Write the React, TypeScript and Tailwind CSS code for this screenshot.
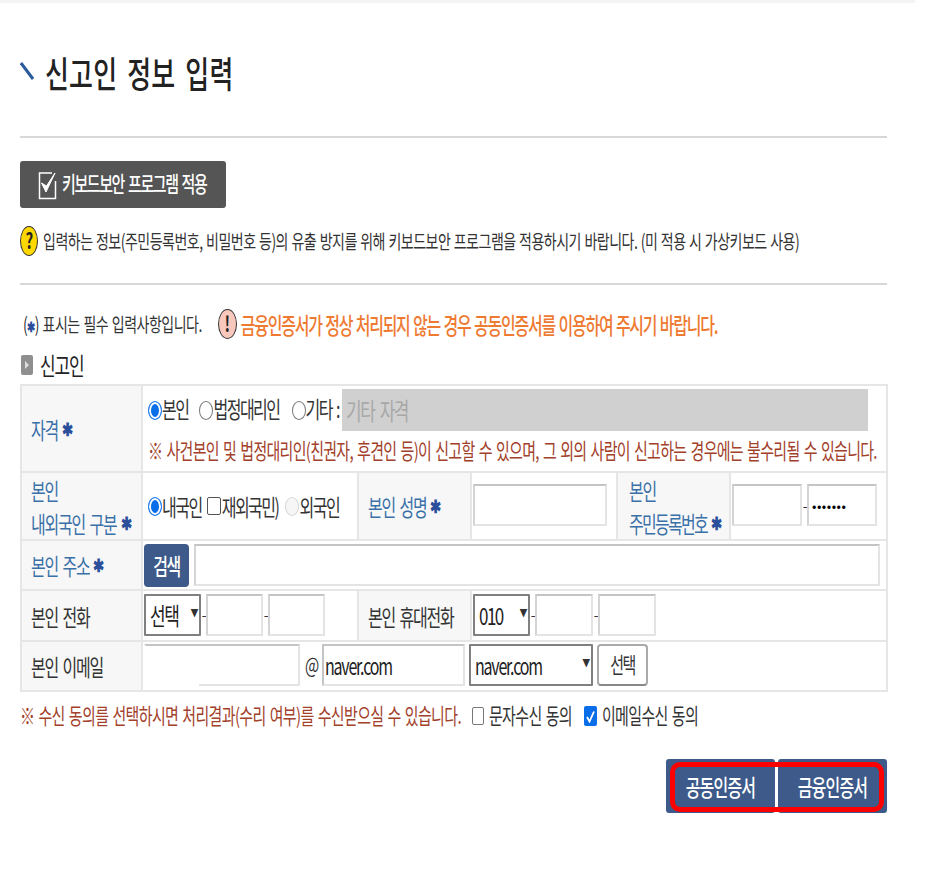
import React from "react";

const font = { fontFamily: '"Noto Sans CJK KR", "Liberation Sans", sans-serif' };

function T({ children, className = "" }: { children: React.ReactNode; className?: string }) {
  return <span className={"inline-block origin-center scale-y-[1.42] whitespace-nowrap " + className}>{children}</span>;
}

function Star() {
  return <span className="ml-[4px] inline-block origin-center scale-y-[1.35] text-[13px] font-bold text-[#2b4f9b]">✱</span>;
}

function Label({ children, req, dark, className = "" }: { children: React.ReactNode; req?: boolean; dark?: boolean; className?: string }) {
  return (
    <span className={"inline-flex items-center " + (dark ? "text-[#333] " : "text-[#3a70a8] ") + className}>
      <T>{children}</T>
      {req && <Star />}
    </span>
  );
}

function Th({ children }: { children: React.ReactNode }) {
  return (
    <th className="border-2 border-[#e6e6e6] bg-[#f7f7f7] pl-[9px] pr-0 text-left text-[16px] font-normal tracking-[-1.2px] [word-spacing:2px]">
      {children}
    </th>
  );
}

function Td({ children, colSpan, className = "" }: { children?: React.ReactNode; colSpan?: number; className?: string }) {
  return (
    <td colSpan={colSpan} className={"border-2 border-[#e6e6e6] p-0 text-[16px] tracking-[-1.5px] text-[#333] " + className}>
      {children}
    </td>
  );
}

function Box({ className = "", type = "text", value }: { className?: string; type?: string; value?: string }) {
  return (
    <input
      type={type}
      readOnly
      value={value ?? ""}
      aria-label="입력"
      className={"h-[42px] shrink-0 border-2 border-[#e4e4e4] border-t-[#c4c4c4] border-l-[#d4d4d4] bg-white px-[3px] outline-none " + className}
    />
  );
}

function Sel({ text, className = "" }: { text: string; className?: string }) {
  return (
    <div className={"relative flex h-[42px] shrink-0 items-center rounded-[1px] border-2 border-[#808080] bg-white pl-[4px] text-[#222] " + className}>
      <T>{text}</T>
      <span className="absolute right-[2px] top-[11px] origin-center scale-y-[1.3] text-[8px] text-[#333]">▼</span>
    </div>
  );
}

function Radio({ on, faded, className = "" }: { on?: boolean; faded?: boolean; className?: string }) {
  return (
    <span
      className={
        "block h-[19px] w-[14px] shrink-0 rounded-[50%] border-[1.5px] " +
        (on
          ? "border-[#1f7cf0] bg-[#0a6ee8] shadow-[inset_0_0_0_2px_#fff] "
          : faded
          ? "border-[#d8d8d8] bg-[#f6f6f6] "
          : "border-[#777] bg-white ") +
        className
      }
    />
  );
}

function Dash() {
  return <span className="w-[5px] shrink-0 text-center text-[14px] text-[#333]">-</span>;
}

export default function App() {
  return (
    <div className="relative h-[873px] w-[925px] overflow-hidden bg-white text-[#222]" style={font}>
      <div className="h-[3px] w-[915px] bg-[#f4f4f4]" />
      <div className="ml-[20px] w-[867px]">
        {/* title */}
        <div className="flex h-[135px] flex-col">
          <div className="flex h-[133px] items-center">
            <svg width="14" height="18" viewBox="0 0 14 18" className="mt-[2px] shrink-0">
              <path d="M1 1 L13 17" stroke="#2a5b9c" strokeWidth="3" fill="none" />
            </svg>
            <h1 className="ml-[11px] mt-[4px] text-[26px] font-medium tracking-[0.15px] text-[#222] [word-spacing:4px]">
              <T className="scale-y-[1.5]">신고인 정보 입력</T>
            </h1>
          </div>
          <div className="h-[2px] bg-[#d8d8d8]" />
        </div>

        {/* keyboard button */}
        <button className="mt-[23px] flex h-[47px] w-[206px] items-center rounded-[3px] bg-[#555] pl-[18px] text-[15px] tracking-[-1.4px] text-white [word-spacing:2px]">
          <svg width="19" height="30" viewBox="0 0 19 30" className="shrink-0">
            <path d="M14 3H1.5V28.5H17.5V11" fill="none" stroke="#fff" strokeWidth="1.5" />
            <path d="M3.5 13 L8 22 L17 3 L8.5 16 Z" fill="#fff" stroke="#fff" strokeWidth="1" />
          </svg>
          <T className="ml-[5px] font-medium">키보드보안 프로그램 적용</T>
        </button>

        {/* info */}
        <div className="mt-[18px] flex h-[30px] items-center text-[14px] tracking-[-0.5px] text-[#333] [word-spacing:0.8px]">
          <span className="flex h-[30px] w-[18px] shrink-0 items-center justify-center rounded-[50%] border border-[#333] bg-[#ffd800] text-[15px] font-bold text-[#222]">
            <T>?</T>
          </span>
          <T className="ml-[5px]">입력하는 정보(주민등록번호, 비밀번호 등)의 유출 방지를 위해 키보드보안 프로그램을 적용하시기 바랍니다. (미 적용 시 가상키보드 사용)</T>
        </div>
        <div className="mt-[27px] h-[2px] bg-[#d8d8d8]" />

        {/* notice */}
        <div className="mt-[24px] flex h-[30px] items-center">
          <span className="ml-[3px] text-[14px] tracking-[-0.5px] text-[#333] [word-spacing:1px]">
            <T>
              (<span className="text-[10px] font-bold text-[#2b4f9b]">✱</span>) 표시는 필수 입력사항입니다.
            </T>
          </span>
          <span className="ml-[16px] flex h-[30px] w-[19px] shrink-0 items-center justify-center rounded-[50%] border border-[#333] bg-[#f8c8bd] text-[15px] font-bold text-[#222]">
            <T>!</T>
          </span>
          <T className="ml-[4px] text-[16px] font-medium tracking-[-1.25px] text-[#ee7a32] [word-spacing:1.2px]">금융인증서가 정상 처리되지 않는 경우 공동인증서를 이용하여 주시기 바랍니다.</T>
        </div>

        {/* section heading */}
        <div className="mt-[12px] flex h-[28px] items-center">
          <span className="ml-[1px] flex h-[20px] w-[12px] shrink-0 items-center justify-center rounded-[2px] bg-[#8f8f8f]">
            <span className="h-[8px] w-[4px] bg-[#ddd] [clip-path:polygon(0_0,100%_50%,0_100%)]" />
          </span>
          <T className="ml-[7px] text-[17px] tracking-[-1.1px] text-[#222]">신고인</T>
        </div>

        {/* form table */}
        <table className="mt-[5px] w-[866px] table-fixed border-collapse">
          <colgroup>
            <col className="w-[121px]" />
            <col className="w-[216px]" />
            <col className="w-[113px]" />
            <col className="w-[146px]" />
            <col className="w-[113px]" />
            <col className="w-[157px]" />
          </colgroup>
          <tbody>
            <tr className="h-[87px]">
              <Th><Label req>자격</Label></Th>
              <Td colSpan={5}>
                <div className="flex h-[45px] items-center pl-[5px] [word-spacing:2px]">
                  <Radio on className="mt-[3px]" />
                  <T className="-mt-[2px]">본인</T>
                  <Radio className="ml-[11px] mt-[3px]" />
                  <T className="-mt-[2px]">법정대리인</T>
                  <Radio className="ml-[12px] mt-[3px]" />
                  <T className="-mt-[2px]">기타 :</T>
                  <div className="ml-[3px] mt-[1px] flex h-[42px] w-[526px] shrink-0 items-center bg-[#d0d0d0] pl-[4px] text-[17px] text-[#a8a8a8] [word-spacing:3px]">
                    <T>기타 자격</T>
                  </div>
                </div>
                <div className="flex h-[39px] items-center pl-[5px] text-[15px] tracking-[-0.7px] text-[#a2402a] [word-spacing:1.5px]">
                  <T>※ 사건본인 및 법정대리인(친권자, 후견인 등)이 신고할 수 있으며, 그 외의 사람이 신고하는 경우에는 불수리될 수 있습니다.</T>
                </div>
              </Td>
            </tr>
            <tr className="h-[68px]">
              <Th>
                <div className="flex h-[33px] items-center"><Label>본인</Label></div>
                <div className="flex h-[33px] items-center"><Label req>내외국인 구분</Label></div>
              </Th>
              <Td>
                <div className="flex items-center pl-[5px]">
                  <Radio on />
                  <T>내국인</T>
                  <span className="ml-[5px] block h-[18px] w-[14px] shrink-0 rounded-[2px] border-[1.5px] border-[#555] bg-white" />
                  <T className="ml-[1px]">재외국민)</T>
                  <Radio faded className="ml-[7px]" />
                  <T>외국인</T>
                </div>
              </Td>
              <Th><Label req>본인 성명</Label></Th>
              <Td><div className="mb-[2px] flex items-center pl-[1px]"><Box className="w-[134px]" /></div></Td>
              <Th>
                <div className="ml-[2px] flex h-[33px] items-center"><Label>본인</Label></div>
                <div className="ml-[2px] flex h-[33px] items-center"><Label req className="tracking-[-1.7px]">주민등록번호</Label></div>
              </Th>
              <Td>
                <div className="mb-[2px] flex items-center pl-[1px]">
                  <Box className="w-[70px]" />
                  <Dash />
                  <Box className="w-[70px] text-[13px] tracking-[0.5px] text-black" type="password" value="1234567" />
                </div>
              </Td>
            </tr>
            <tr className="h-[50px]">
              <Th><Label req>본인 주소</Label></Th>
              <Td colSpan={5}>
                <div className="flex items-center pl-[1px]">
                  <button className="flex h-[43px] w-[45px] shrink-0 items-center justify-center rounded-[4px] bg-[#3d5a8a] text-[16px] font-medium text-white">
                    <T>검색</T>
                  </button>
                  <Box className="ml-[5px] w-[686px]" />
                </div>
              </Td>
            </tr>
            <tr className="h-[51px]">
              <Th><Label dark>본인 전화</Label></Th>
              <Td>
                <div className="mb-[2px] flex items-center pl-[1px]">
                  <Sel text="선택" className="w-[57px] text-[17px]" />
                  <Dash />
                  <Box className="w-[57px]" />
                  <Dash />
                  <Box className="w-[57px]" />
                </div>
              </Td>
              <Th><Label dark>본인 휴대전화</Label></Th>
              <Td colSpan={3}>
                <div className="mb-[2px] flex items-center pl-[1px]">
                  <Sel text="010" className="w-[57px] text-[17px]" />
                  <Dash />
                  <Box className="w-[58px]" />
                  <Dash />
                  <Box className="w-[58px]" />
                </div>
              </Td>
            </tr>
            <tr className="h-[50px]">
              <Th><Label dark>본인 이메일</Label></Th>
              <Td colSpan={5}>
                <div className="mb-[2px] flex items-center pl-[1px]">
                  <div className="relative shrink-0">
                    <Box className="w-[156px] border-l-white" />
                    <span className="absolute bottom-0 left-0 h-[3px] w-[55px] bg-white" />
                  </div>
                  <T className="ml-[5px] w-[17px] text-[15px]">@</T>
                  <div className="flex h-[42px] w-[143px] shrink-0 items-center border-2 border-[#e4e4e4] border-l-[#c4c4c4] border-t-[#c4c4c4] bg-white pl-[1px] text-[16px] tracking-[-1.2px] text-[#222]">
                    <T>naver.com</T>
                  </div>
                  <Sel text="naver.com" className="ml-[4px] w-[124px] text-[16px] tracking-[-1.2px]" />
                  <button className="ml-[4px] flex h-[42px] w-[51px] shrink-0 items-center justify-center rounded-[4px] border-2 border-[#aaa] border-b-[#888] bg-white text-[15px] text-[#333]">
                    <T>선택</T>
                  </button>
                </div>
              </Td>
            </tr>
          </tbody>
        </table>

        {/* consent */}
        <div className="mt-[10px] flex h-[28px] items-center text-[15px] tracking-[-0.65px] [word-spacing:1.4px]">
          <T className="text-[#a2402a]">※ 수신 동의를 선택하시면 처리결과(수리 여부)를 수신받으실 수 있습니다.</T>
          <span className="ml-[11px] block h-[18px] w-[12px] shrink-0 rounded-[2px] border-[1.5px] border-[#777] bg-white" />
          <T className="ml-[5px] text-[#333]">문자수신 동의</T>
          <span className="ml-[12px] flex h-[20px] w-[13px] shrink-0 items-center justify-center rounded-[2px] bg-[#0a6ee8]">
            <svg width="9" height="13" viewBox="0 0 9 13"><path d="M1 7 L3.5 11.5 L8 1.5" fill="none" stroke="#fff" strokeWidth="1.8" /></svg>
          </span>
          <T className="ml-[5px] text-[#333]">이메일수신 동의</T>
        </div>

        {/* cert buttons */}
        <div className="mt-[29px] flex justify-end">
          <div className="relative flex h-[54px] gap-[3px]">
            <button className="flex h-[54px] w-[109px] items-center justify-center rounded-[3px] bg-[#3d5a8a] text-[16px] font-medium tracking-[-0.8px] text-white">
              <T>공동인증서</T>
            </button>
            <button className="flex h-[54px] w-[109px] items-center justify-center rounded-[3px] bg-[#3d5a8a] text-[16px] font-medium tracking-[-0.8px] text-white">
              <T>금융인증서</T>
            </button>
            <div className="absolute bottom-[1px] left-[4px] right-[3px] top-[3px] rounded-[10px] border-[5px] border-[#f00]" />
          </div>
        </div>
      </div>
    </div>
  );
}
